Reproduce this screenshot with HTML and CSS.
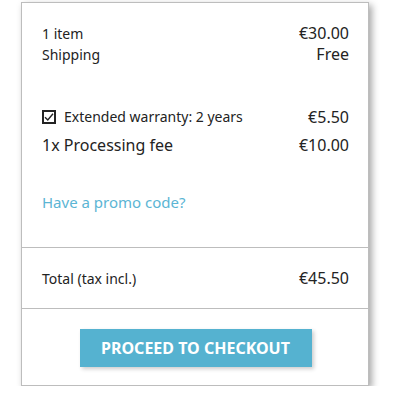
FILE: index.html
```html
<!DOCTYPE html>
<html>
<head>
<meta charset="utf-8">
<link rel="stylesheet" href="styles.css">
</head>
<body>
<div class="card">
  <div class="section top">
    <div class="row small"><span>1 item</span><span class="v">€30.00</span></div>
    <div class="row small"><span>Shipping</span><span class="v">Free</span></div>
    <div class="row small warranty">
      <span class="label"><span class="checkbox"><svg width="10" height="10" viewBox="0 0 10 10"><path d="M1 5.2 L3.8 8 L9 1.8" fill="none" stroke="#232323" stroke-width="1.4"/></svg></span>Extended warranty: 2 years</span>
      <span class="v">€5.50</span>
    </div>
    <div class="row big fee"><span>1x Processing fee</span><span class="v">€10.00</span></div>
    <a class="promo">Have a promo code?</a>
  </div>
  <div class="section total">
    <div class="row small"><span>Total (tax incl.)</span><span class="v">€45.50</span></div>
  </div>
  <div class="section actions">
    <button class="checkout">Proceed to checkout</button>
  </div>
</div>
</body>
</html>
```

FILE: styles.css
```css
html, body {
  margin: 0;
  padding: 0;
  background: #fff;
}
body {
  font-family: "Noto Sans", "Open Sans", sans-serif;
  color: #232323;
}
.card {
  margin: 2px 0 0 21px;
  width: 348px;
  box-sizing: border-box;
  border: 1px solid #bdbdbd;
  box-shadow: 3px 3px 7px 0 rgba(0, 0, 0, 0.35);
  background: #fff;
}
.section {
  padding: 0 19px 0 20px;
}
.top {
  padding-top: 20px;
  height: 245px;
  box-sizing: border-box;
  border-bottom: 1px solid #bdbdbd;
}
.row {
  display: flex;
  justify-content: space-between;
  align-items: baseline;
}
.small {
  font-size: 14px;
  line-height: 20px;
}
.v {
  font-size: 16px;
}
.big {
  font-size: 16px;
  line-height: 22px;
}
.warranty {
  margin-top: 42px;
  align-items: center;
}
.label {
  display: flex;
  align-items: center;
}
.checkbox {
  width: 14px;
  height: 14px;
  box-sizing: border-box;
  border: 2px solid #232323;
  margin-right: 8px;
  display: flex;
  align-items: center;
  justify-content: center;
}
.fee {
  margin-top: 7px;
}
.promo {
  display: block;
  margin-top: 35px;
  font-size: 15px;
  line-height: 22px;
  color: #5bb5d4;
}
.total {
  padding-top: 20px;
  padding-bottom: 19px;
  border-bottom: 1px solid #bdbdbd;
}
.actions {
  padding-top: 20px;
  padding-bottom: 18px;
  display: flex;
  justify-content: center;
}
.checkout {
  width: 232px;
  height: 38px;
  border: 0;
  background: #55b2d0;
  color: #fff;
  font-family: "Noto Sans", "Open Sans", sans-serif;
  font-weight: 700;
  font-size: 16px;
  text-transform: uppercase;
  box-shadow: 2px 2px 4px 0 rgba(0, 0, 0, 0.2);
  padding: 0;
}
```
